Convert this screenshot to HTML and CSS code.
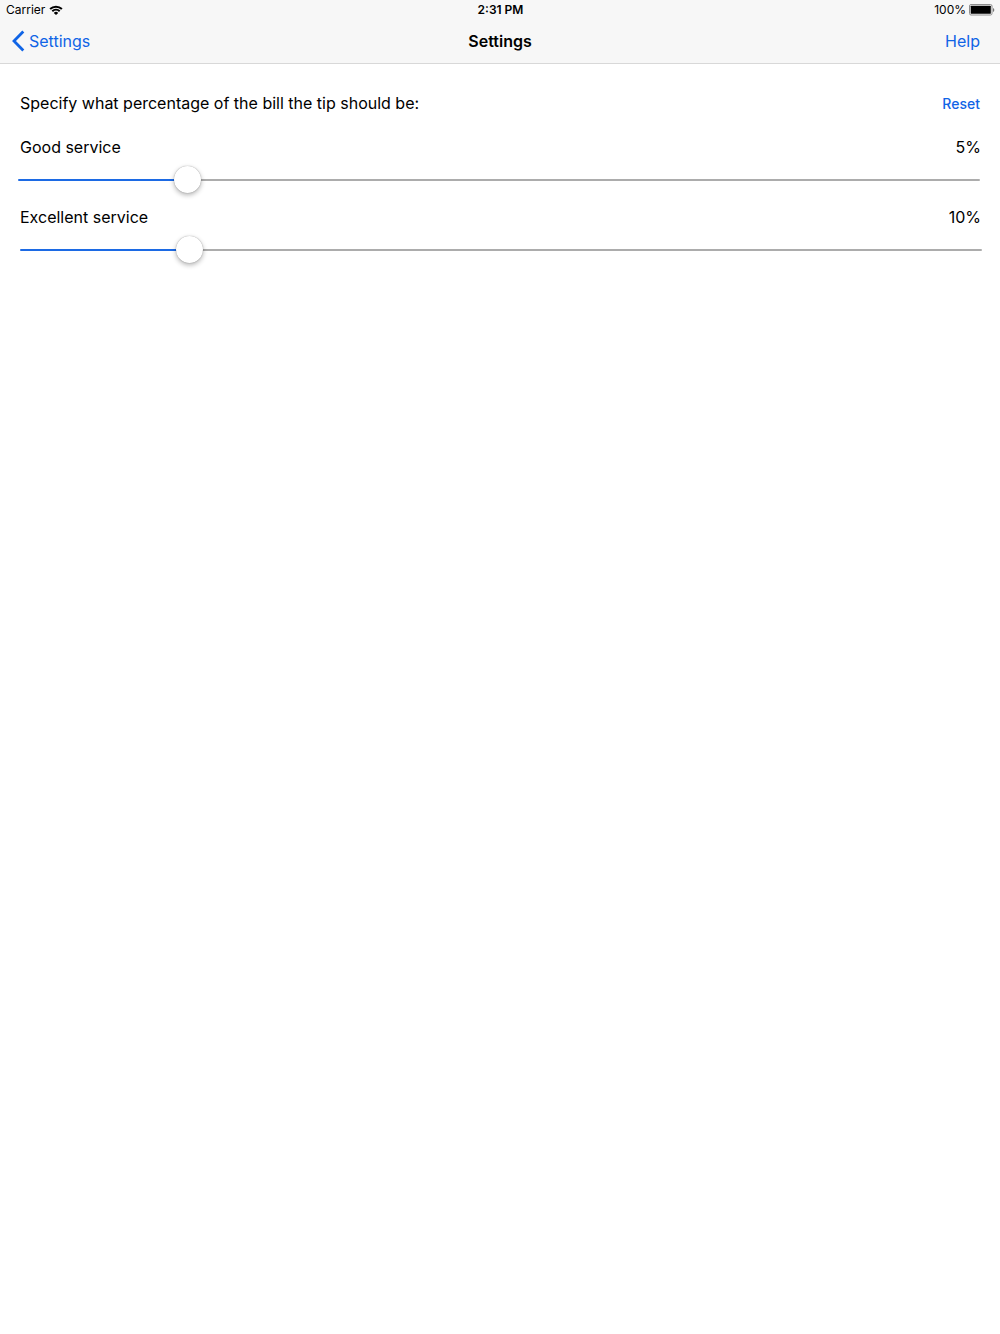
FILE: index.html
```html
<!DOCTYPE html>
<html lang="en">
<head>
<meta charset="utf-8">
<meta name="viewport" content="width=device-width, initial-scale=1">
<title>Settings</title>
<link rel="stylesheet" href="styles.css">
</head>
<body>
<header class="top">
  <div class="status">
    <div class="status-side">
      <span>Carrier</span>
      <svg class="wifi" viewBox="0 0 14 10" aria-hidden="true">
        <path d="M0.4 3.3a9.6 9.6 0 0 1 13.2 0l-1.4 1.5a7.5 7.5 0 0 0-10.4 0z"/>
        <path d="M2.6 5.6a6.4 6.4 0 0 1 8.8 0L10 7a4.4 4.4 0 0 0-6 0z"/>
        <path d="M4.8 7.9a3.2 3.2 0 0 1 4.4 0L7 10z"/>
      </svg>
    </div>
    <time class="clock">2:31 PM</time>
    <div class="status-side status-end">
      <span>100%</span>
      <svg class="battery" viewBox="0 0 26 12" aria-hidden="true">
        <rect x="0.5" y="0.5" width="22.5" height="10.5" rx="1.5" fill="none" stroke="#8e8e8e"/>
        <rect x="1.7" y="1.7" width="20.1" height="8.1" rx="0.5"/>
        <path d="M24 4v4q1.3-0.6 1.3-2T24 4z" fill="#777"/>
      </svg>
    </div>
  </div>
  <nav class="nav">
    <a class="back" href="#">
      <svg class="chevron" viewBox="0 0 13 22" aria-hidden="true"><path d="M11.3 1.5 2 11l9.3 9.5" fill="none" stroke="currentColor" stroke-width="2.8"/></svg>
      <span>Settings</span>
    </a>
    <h1 class="title">Settings</h1>
    <a class="help" href="#">Help</a>
  </nav>
</header>
<main class="content">
  <div class="row intro">
    <p>Specify what percentage of the bill the tip should be:</p>
    <button class="reset" type="button">Reset</button>
  </div>
  <section class="setting">
    <div class="row">
      <label for="good">Good service</label>
      <output for="good">5%</output>
    </div>
    <input class="slider slider-good" id="good" type="range" min="0" max="30" value="5" style="--fill: 17%">
  </section>
  <section class="setting">
    <div class="row">
      <label for="excellent">Excellent service</label>
      <output for="excellent">10%</output>
    </div>
    <input class="slider slider-excellent" id="excellent" type="range" min="0" max="60" value="10" style="--fill: 17%">
  </section>
</main>
</body>
</html>
```
FILE: styles.css
```css
* {
  box-sizing: border-box;
}

body {
  margin: 0;
  background: #fff;
  color: #000;
  font-family: Inter, "Liberation Sans", sans-serif;
  font-size: 16px;
  line-height: 20px;
}

h1,
p {
  margin: 0;
}

a,
button {
  color: #1064e6;
  text-decoration: none;
}

.top {
  background: #f7f7f7;
  border-bottom: 1px solid #d8d8d8;
}

.status,
.nav {
  display: grid;
  grid-template-columns: 1fr auto 1fr;
  align-items: center;
}

.status {
  height: 20px;
  padding: 0 5px 0 6px;
  font-size: 12px;
}

.status-side {
  display: flex;
  align-items: center;
  gap: 4px;
}

.status-end {
  justify-content: flex-end;
  gap: 3px;
}

.wifi {
  width: 14px;
  height: 10px;
}

.battery {
  width: 26px;
  height: 12px;
}

.clock {
  font-weight: 600;
}

.nav {
  height: 43px;
  padding: 0 12px 2px;
}

.back {
  display: flex;
  align-items: center;
  gap: 4px;
}

.chevron {
  width: 13px;
  height: 22px;
}

.title {
  font-size: 16px;
  font-weight: 600;
}

.help {
  justify-self: end;
  padding-right: 8px;
}

.content {
  padding: 29px 18px;
}

.row {
  display: flex;
  align-items: flex-start;
  justify-content: space-between;
  padding: 0 1px 0 2px;
}

.intro {
  margin-bottom: 22px;
  padding-right: 2px;
}

.reset {
  padding: 0;
  border: 0;
  background: none;
  font: 500 14px/22px Inter, "Liberation Sans", sans-serif;
}

.setting {
  height: 70px;
}

.slider {
  display: block;
  width: calc(100% - 2px);
  height: 28px;
  margin: 9px 0 0;
  appearance: none;
  background: none;
}

.slider-excellent {
  margin-left: 2px;
}

.slider::-webkit-slider-runnable-track {
  height: 2px;
  border-radius: 1px;
  background: linear-gradient(to right, #1c6ae4 var(--fill), #acacac var(--fill));
}

.slider::-webkit-slider-thumb {
  width: 27px;
  height: 27px;
  margin-top: -13px;
  border: 0;
  border-radius: 50%;
  appearance: none;
  background: #fff;
  box-shadow: 0 0 1px rgba(0, 0, 0, 0.4), 0 2px 5px rgba(0, 0, 0, 0.3);
}
```
